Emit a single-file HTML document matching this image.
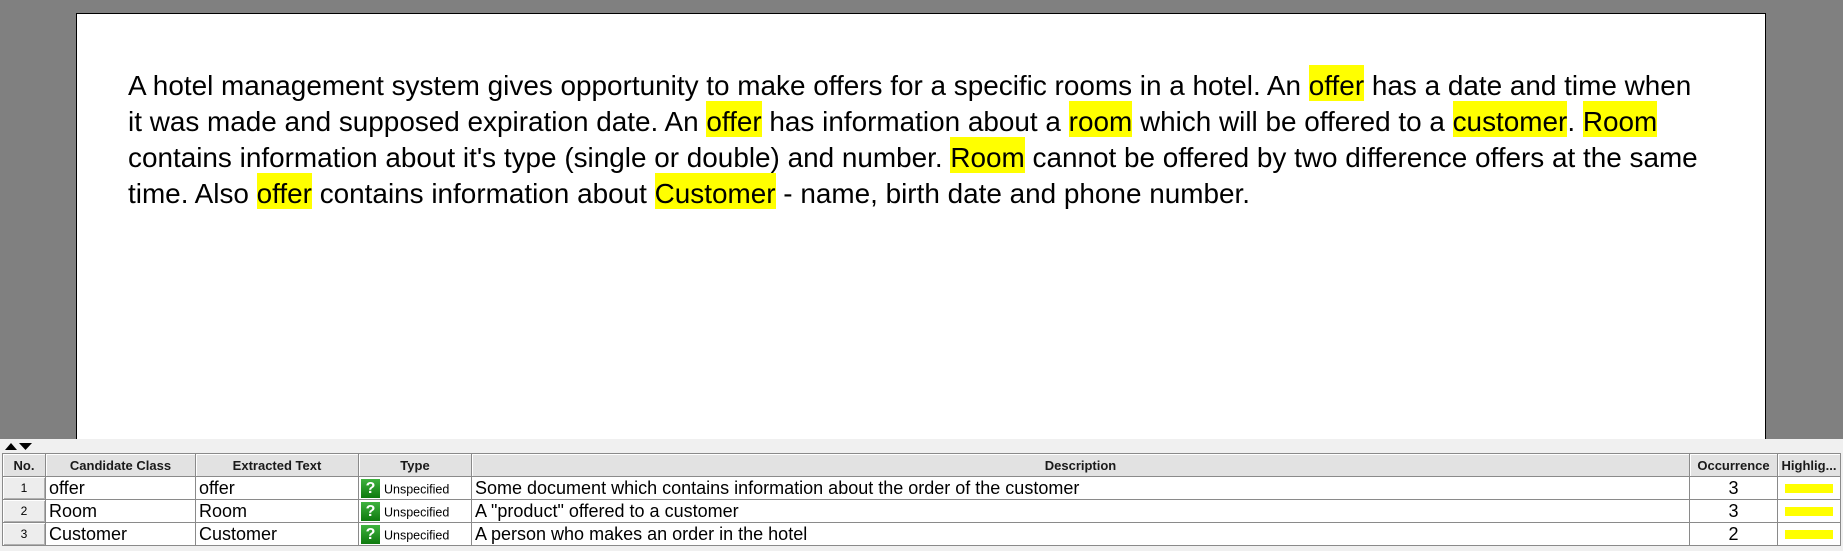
<!DOCTYPE html>
<html><head><meta charset="utf-8"><style>
body{margin:0;width:1843px;height:551px;background:#808080;position:relative;overflow:hidden;font-family:"Liberation Sans",Arial,sans-serif}
#page{position:absolute;left:76px;top:13px;width:1690px;height:427px;background:#fff;border:1px solid #000;border-bottom:none;box-sizing:border-box}
#txt{position:absolute;left:128px;top:64.5px;font-size:27.9px;line-height:36.3px;color:#000}
#txt div{white-space:nowrap;height:36.3px}
.h{background:#ffff00;display:inline-block;height:36px;line-height:31px;padding-top:5px;box-sizing:border-box}
#bar{position:absolute;left:0;top:439px;width:1843px;height:112px;background:#f0f0f0}
table{position:absolute;left:2px;top:453px;border-collapse:collapse;table-layout:fixed;background:#fff}
td,th{border:1px solid #8a8a8a;padding:0 3px;overflow:hidden;white-space:nowrap}
th{height:22px;background:#e2e2e2;font-size:13px;font-weight:bold;color:#1a1a1a;box-shadow:inset 1px 1px 0 #fff}
td{height:22px;font-size:18px;color:#000}
td.n{background:#ededed;text-align:center;font-size:12px;box-shadow:inset 1px 1px 0 #fff,inset -1px -1px 0 #b0b0b0}
td.c{text-align:center}
.q{display:inline-block;width:19px;height:19px;background:linear-gradient(#3fb23f,#0e7a0e);color:#fff;font-weight:bold;font-size:16px;line-height:19px;text-align:center;vertical-align:middle;margin-right:4px;margin-left:-1px}
.t{font-size:12.5px;vertical-align:middle}
.y{display:block;width:48px;height:9px;background:#ffff00;margin:0 auto}
</style></head><body>
<div id="page"></div>
<div id="txt">
<div>A hotel management system gives opportunity to make offers for a specific rooms in a hotel. An <span class="h">offer</span> has a date and time when</div>
<div>it was made and supposed expiration date. An <span class="h">offer</span> has information about a <span class="h">room</span> which will be offered to a <span class="h">customer</span>. <span class="h">Room</span></div>
<div>contains information about it's type (single or double) and number. <span class="h">Room</span> cannot be offered by two difference offers at the same</div>
<div>time. Also <span class="h">offer</span> contains information about <span class="h">Customer</span> - name, birth date and phone number.</div>
</div>
<div id="bar"></div>
<svg style="position:absolute;left:5px;top:442px" width="30" height="9"><path d="M0 8L6 1L12 8Z M14 1L27 1L20.5 8Z" fill="#000"/></svg>
<table>
<colgroup><col style="width:43px"><col style="width:150px"><col style="width:163px"><col style="width:113px"><col style="width:1218px"><col style="width:88px"><col style="width:63px"></colgroup>
<tr><th>No.</th><th>Candidate Class</th><th>Extracted Text</th><th>Type</th><th>Description</th><th>Occurrence</th><th>Highlig...</th></tr>
<tr><td class="n">1</td><td>offer</td><td>offer</td><td><span class="q">?</span><span class="t">Unspecified</span></td><td>Some document which contains information about the order of the customer</td><td class="c">3</td><td><span class="y"></span></td></tr>
<tr><td class="n">2</td><td>Room</td><td>Room</td><td><span class="q">?</span><span class="t">Unspecified</span></td><td>A "product" offered to a customer</td><td class="c">3</td><td><span class="y"></span></td></tr>
<tr><td class="n">3</td><td>Customer</td><td>Customer</td><td><span class="q">?</span><span class="t">Unspecified</span></td><td>A person who makes an order in the hotel</td><td class="c">2</td><td><span class="y"></span></td></tr>
</table>
</body></html>
